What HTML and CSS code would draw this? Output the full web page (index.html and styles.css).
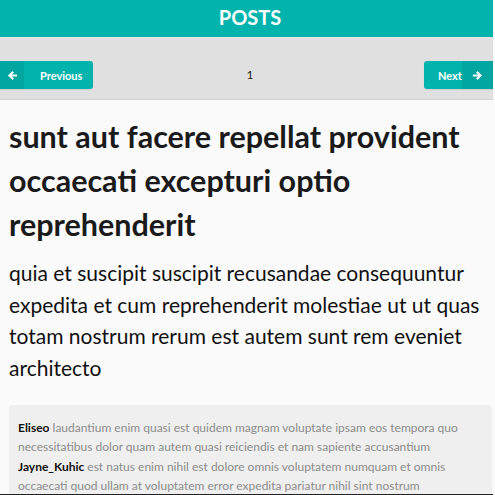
FILE: index.html
```html
<!DOCTYPE html>
<html>
<head>
<meta charset="utf-8">
<link rel="stylesheet" href="styles.css">
</head>
<body>
<div class="page">
  <header class="topbar">POSTS</header>
  <nav class="pager">
    <a class="btn btn-prev"><span class="ico"><svg width="11" height="11" viewBox="0 0 12 12"><path d="M1 6 L6 1 L7.6 2.6 L5.3 4.9 H11 V7.1 H5.3 L7.6 9.4 L6 11 Z" fill="#fff"/></svg></span><span class="lbl">Previous</span></a>
    <span class="num">1</span>
    <a class="btn btn-next"><span class="lbl">Next</span><span class="ico"><svg width="11" height="11" viewBox="0 0 12 12"><path d="M11 6 L6 1 L4.4 2.6 L6.7 4.9 H1 V7.1 H6.7 L4.4 9.4 L6 11 Z" fill="#fff"/></svg></span></a>
  </nav>
  <main class="content">
    <h1 class="title">sunt aut facere repellat provident occaecati excepturi optio reprehenderit</h1>
    <p class="body">quia et suscipit suscipit recusandae consequuntur expedita et cum reprehenderit molestiae ut ut quas totam nostrum rerum est autem sunt rem eveniet architecto</p>
    <section class="comments">
      <p class="comment"><b>Eliseo</b> laudantium enim quasi est quidem magnam voluptate ipsam eos tempora quo necessitatibus dolor quam autem quasi reiciendis et nam sapiente accusantium</p>
      <p class="comment"><b>Jayne_Kuhic</b> est natus enim nihil est dolore omnis voluptatem numquam et omnis occaecati quod ullam at voluptatem error expedita pariatur nihil sint nostrum voluptatem reiciendis et</p>
    </section>
  </main>
</div>
<div class="edge"></div>
</body>
</html>
```
FILE: styles.css
```css
html, body { margin: 0; padding: 0; }
body {
  background: #fafafa;
  font-family: Lato, "Open Sans", sans-serif;
  overflow: hidden;
  height: 495px;
}
.page { width: 493px; }
.topbar {
  background: #00b3ac;
  color: #fff;
  font-weight: 700;
  font-size: 20px;
  height: 37px;
  line-height: 34px;
  text-align: center;
  padding-left: 7px;
  border-bottom: 1px solid #e8e8e8;
}
.pager {
  background: #e0e0e0;
  height: 62px;
  border-bottom: 1px solid #d4d4d4;
  display: flex;
  align-items: flex-start;
  justify-content: space-between;
  padding-top: 23px;
  box-sizing: border-box;
}
.btn {
  display: flex;
  align-items: stretch;
  height: 28px;
  background: #00b3ac;
  color: #fff;
  font-weight: 700;
  font-size: 11px;
  border-radius: 3px;
  overflow: hidden;
  box-shadow: 0 1px 1px rgba(0,0,0,0.08);
}
.btn .ico {
  background: #00a69f;
  display: flex;
  align-items: center;
  justify-content: center;
}
.btn .lbl { display: flex; align-items: center; }
.btn-prev { width: 93px; border-radius: 0 3px 3px 0; }
.btn-prev .ico { width: 24px; }
.btn-prev .lbl { padding-left: 16px; }
.btn-next { width: 69px; border-radius: 3px 0 0 3px; }
.btn-next .lbl { width: 38px; padding-left: 14px; box-sizing: border-box; }
.btn-next .ico { flex: 1; }
.num {
  font-size: 12px;
  line-height: 28px;
  color: #222;
  margin-left: -17px;
}
.content { padding: 14px 1px 0 9px; }
.title {
  margin: 0;
  font-size: 30.5px;
  line-height: 44px;
  font-weight: 700;
  color: #1a1a1a;
  padding-right: 8px;
}
.body {
  margin: 11px 0 0 0;
  font-size: 21px;
  line-height: 31.5px;
  color: #111;
  padding-right: 8px;
}
.comments {
  margin-top: 22px;
  background: #efefef;
  border-radius: 4px;
  padding: 13px 24px 10px 9px;
}
.comment {
  margin: 0;
  font-size: 12px;
  line-height: 19.4px;
  color: #8c8c8c;
}
.comment b { color: #111; font-weight: 700; }
.edge {
  position: fixed;
  left: 0; right: 2px; bottom: 0;
  height: 1px;
  background: #222;
}
```
